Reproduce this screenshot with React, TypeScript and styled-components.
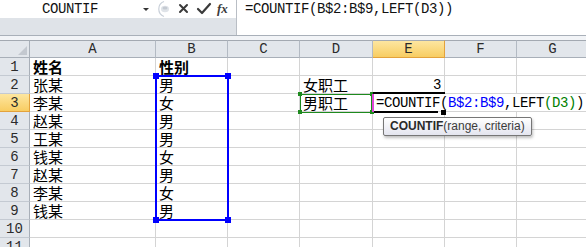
import styled, { createGlobalStyle } from 'styled-components';

const GlobalStyle = createGlobalStyle`
  html, body {
    margin: 0;
    padding: 0;
    background: #ffffff;
    overflow: hidden;
  }
`;

const MONO = `"Liberation Mono", "DejaVu Sans Mono", monospace`;
const CJK = `"Noto Sans CJK SC", "Noto Sans", sans-serif`;

const COLS = ['A', 'B', 'C', 'D', 'E', 'F', 'G'];
const WIDTHS = [126, 72, 72, 73, 72, 72, 72];
const ROW_HEAD = 30;
const ROW_H = 18;

// left edge of each column inside the sheet
const edges: number[] = [ROW_HEAD];
WIDTHS.forEach((w, i) => edges.push(edges[i] + w));
const rowTop = (r: number) => ROW_H + (r - 1) * ROW_H;

const Page = styled.div`
  width: 586px;
  height: 247px;
  overflow: hidden;
  background: #ffffff;
`;

const TopBar = styled.div`
  display: flex;
  height: 35px;
  border-bottom: 1px solid #a9b0b9;
`;

const LeftPane = styled.div`
  width: 236px;
  display: flex;
  flex-direction: column;
`;

const NameRow = styled.div`
  height: 18px;
  display: flex;
  align-items: center;
  background: #ffffff;
`;

const NameBox = styled.div`
  width: 140px;
  text-align: center;
  font-family: ${MONO};
  font-size: 14px;
  letter-spacing: -0.4px;
  color: #111;
`;

const Tools = styled.div`
  display: flex;
  align-items: center;
  gap: 0;
`;

const Band = styled.div`
  flex: 1;
  background: #dfe3e8;
`;

const FormulaPane = styled.div`
  flex: 1;
  border-left: 1px solid #b9bec5;
  padding: 1px 0 0 8px;
  font-family: ${MONO};
  font-size: 14px;
  letter-spacing: -0.4px;
  line-height: 16px;
  color: #111;
  white-space: nowrap;
`;

const Spacer = styled.div`
  height: 4px;
  background: #f2f4f7;
`;

const Sheet = styled.div`
  position: relative;
  display: grid;
  grid-template-columns: ${ROW_HEAD}px ${WIDTHS.map((w) => `${w}px`).join(' ')};
  grid-auto-rows: ${ROW_H}px;
`;

const Corner = styled.div`
  background: #e2e6eb;
  border-top: 1px solid #a3a9b1;
  border-right: 1px solid #a8afb8;
  border-bottom: 1px solid #a8afb8;
  box-sizing: border-box;
  position: relative;
  &::after {
    content: '';
    position: absolute;
    right: 2px;
    bottom: 2px;
    border-style: solid;
    border-width: 0 0 9px 9px;
    border-color: transparent transparent #c3c8cf transparent;
  }
`;

const ColHead = styled.div<{ $active?: boolean }>`
  box-sizing: border-box;
  border-top: 1px solid #a3a9b1;
  border-right: 1px solid ${(p) => (p.$active ? '#e3a23c' : '#b3bac3')};
  border-bottom: 1px solid ${(p) => (p.$active ? '#e3a23c' : '#a8afb8')};
  background: ${(p) =>
    p.$active ? 'linear-gradient(#fde6a0, #f8cd62)' : '#e2e6eb'};
  font-family: ${MONO};
  font-size: 14px;
  line-height: 17px;
  text-align: center;
  color: #2b2b2b;
`;

const RowHead = styled.div<{ $active?: boolean }>`
  box-sizing: border-box;
  border-right: 1px solid ${(p) => (p.$active ? '#e3a23c' : '#a8afb8')};
  border-bottom: 1px solid ${(p) => (p.$active ? '#e3a23c' : '#c4cad2')};
  background: ${(p) =>
    p.$active ? 'linear-gradient(#fde6a0, #f8cd62)' : '#e2e6eb'};
  font-family: ${MONO};
  font-size: 14px;
  line-height: 18px;
  text-align: center;
  color: #2b2b2b;
`;

const Cell = styled.div<{ $bold?: boolean; $right?: boolean; $latin?: boolean; $span?: number }>`
  box-sizing: border-box;
  border-right: 1px solid #d4d4d4;
  border-bottom: 1px solid #d4d4d4;
  padding: 0 3px;
  grid-column: span ${(p) => p.$span || 1};
  font-family: ${(p) => (p.$latin ? MONO : CJK)};
  font-size: ${(p) => (p.$latin ? '14px' : '15px')};
  letter-spacing: ${(p) => (p.$latin ? '-0.4px' : '0')};
  font-weight: ${(p) => (p.$bold ? 700 : 400)};
  text-align: ${(p) => (p.$right ? 'right' : 'left')};
  line-height: 18px;
  white-space: nowrap;
  overflow: hidden;
  color: #000;
`;

const Ref = styled.span<{ $color: string }>`
  color: ${(p) => p.$color};
`;

const Box = styled.div<{ $color: string; $width: number }>`
  position: absolute;
  box-sizing: border-box;
  border: ${(p) => p.$width}px solid ${(p) => p.$color};
  pointer-events: none;
`;

const Handle = styled.div<{ $color: string; $size: number }>`
  position: absolute;
  width: ${(p) => p.$size}px;
  height: ${(p) => p.$size}px;
  background: ${(p) => p.$color};
`;

const Line = styled.div<{ $color: string }>`
  position: absolute;
  background: ${(p) => p.$color};
`;

const Tip = styled.div`
  position: absolute;
  box-sizing: border-box;
  height: 19px;
  padding: 0 6px 0 6px;
  border: 1px solid #767676;
  border-radius: 2px;
  background: linear-gradient(#ffffff, #e4e5ef);
  box-shadow: 1px 2px 3px rgba(0, 0, 0, 0.25);
  font-family: "Liberation Sans", Arial, sans-serif;
  font-size: 12px;
  line-height: 17px;
  color: #3c3c3c;
  white-space: nowrap;
`;

const TipName = styled.b`
  color: #2a2a2a;
`;

type Row = { cells: string[]; bold?: boolean };

const rows: Row[] = [
  { cells: ['姓名', '性别'], bold: true },
  { cells: ['张某', '男', '', '女职工'] },
  { cells: ['李某', '女', '', '男职工'] },
  { cells: ['赵某', '男'] },
  { cells: ['王某', '男'] },
  { cells: ['钱某', '女'] },
  { cells: ['赵某', '男'] },
  { cells: ['李某', '女'] },
  { cells: ['钱某', '男'] },
  { cells: [] },
  { cells: [] },
];

function Formula() {
  return (
    <>
      =COUNTIF(<Ref $color="#0000ff">B$2:B$9</Ref>,LEFT
      <Ref $color="#008000">(D3)</Ref>)
    </>
  );
}

function ToolIcons() {
  return (
    <Tools>
      <svg width="14" height="18" viewBox="0 0 14 18">
        <path d="M3 8 h6 l-3 3 z" fill="#333" />
      </svg>
      <svg width="20" height="18" viewBox="0 0 20 18">
        <path d="M10 1.5 A8 8 0 0 0 10 16.5" fill="none" stroke="#c9d0d9" strokeWidth="1.2" />
        <ellipse cx="11" cy="9" rx="4" ry="3.2" fill="#dfe3e8" />
        <ellipse cx="11" cy="8" rx="2.5" ry="1.6" fill="#c4cad2" />
      </svg>
      <svg width="20" height="18" viewBox="0 0 20 18">
        <path d="M6 5 L13 12 M13 5 L6 12" stroke="#3a3a3a" strokeWidth="2" strokeLinecap="round" />
      </svg>
      <svg width="20" height="18" viewBox="0 0 20 18">
        <path d="M4 9 L8 13 L16 4" fill="none" stroke="#3a3a3a" strokeWidth="2.2" strokeLinecap="round" strokeLinejoin="round" />
      </svg>
      <svg width="20" height="18" viewBox="0 0 20 18">
        <text x="3" y="13" fontFamily='"Liberation Serif", serif' fontStyle="italic" fontWeight="bold" fontSize="13" fill="#3a3a3a">
          fx
        </text>
      </svg>
    </Tools>
  );
}

export default function App() {
  const bLeft = edges[1];
  const bRight = edges[2];
  const dLeft = edges[3];
  const eLeft = edges[4];
  const eRight = edges[5];

  return (
    <Page>
      <GlobalStyle />
      <TopBar>
        <LeftPane>
          <NameRow>
            <NameBox>COUNTIF</NameBox>
            <ToolIcons />
          </NameRow>
          <Band />
        </LeftPane>
        <FormulaPane>=COUNTIF(B$2:B$9,LEFT(D3))</FormulaPane>
      </TopBar>
      <Spacer />
      <Sheet>
        <Corner />
        {COLS.map((c) => (
          <ColHead key={c} $active={c === 'E'}>
            {c}
          </ColHead>
        ))}
        {rows.map((row, ri) => {
          const r = ri + 1;
          return [
            <RowHead key={`h${r}`} $active={r === 3}>
              {r}
            </RowHead>,
            ...COLS.map((c, ci) => {
              if (r === 2 && c === 'E')
                return (
                  <Cell key={c + r} $latin $right>
                    3
                  </Cell>
                );
              if (r === 3 && c === 'E')
                return (
                  <Cell key={c + r} $latin $span={3}>
                    <Formula />
                  </Cell>
                );
              if (r === 3 && (c === 'F' || c === 'G')) return null;
              return (
                <Cell key={c + r} $bold={row.bold}>
                  {row.cells[ci] || ''}
                </Cell>
              );
            }),
          ];
        })}

        {/* range B2:B9 */}
        <Box
          $color="#0000ff"
          $width={2}
          style={{ left: bLeft - 1, top: rowTop(2) - 1, width: bRight - bLeft + 2, height: 8 * ROW_H + 2 }}
        />
        {[
          [bLeft, rowTop(2)],
          [bRight, rowTop(2)],
          [bLeft, rowTop(10)],
          [bRight, rowTop(10)],
        ].map(([x, y], i) => (
          <Handle key={`b${i}`} $color="#0000ff" $size={6} style={{ left: x - 3, top: y - 3 }} />
        ))}

        {/* reference D3 */}
        <Box
          $color="#1e8a1e"
          $width={1}
          style={{ left: dLeft, top: rowTop(3), width: eLeft - dLeft - 1, height: ROW_H + 1 }}
        />
        {[
          [dLeft, rowTop(3)],
          [eLeft - 1, rowTop(3)],
          [dLeft, rowTop(4)],
          [eLeft - 1, rowTop(4)],
        ].map(([x, y], i) => (
          <Handle key={`d${i}`} $color="#1e8a1e" $size={4} style={{ left: x - 2, top: y - 2 }} />
        ))}

        {/* active cell E3 */}
        <Line $color="#000" style={{ left: eLeft, top: rowTop(3) - 2, width: eRight - eLeft, height: 2 }} />
        <Line $color="#e045d8" style={{ left: eLeft - 1, top: rowTop(3), width: 2, height: ROW_H }} />
        <Line $color="#000" style={{ left: eLeft + 1, top: rowTop(4) - 1, width: eRight - eLeft - 8, height: 2 }} />
        <Handle $color="#000" $size={5} style={{ left: eRight - 4, top: rowTop(4) - 2 }} />

        <Tip style={{ left: 383, top: rowTop(4) + 5 }}>
          <TipName>COUNTIF</TipName>(range, criteria)
        </Tip>
      </Sheet>
    </Page>
  );
}
